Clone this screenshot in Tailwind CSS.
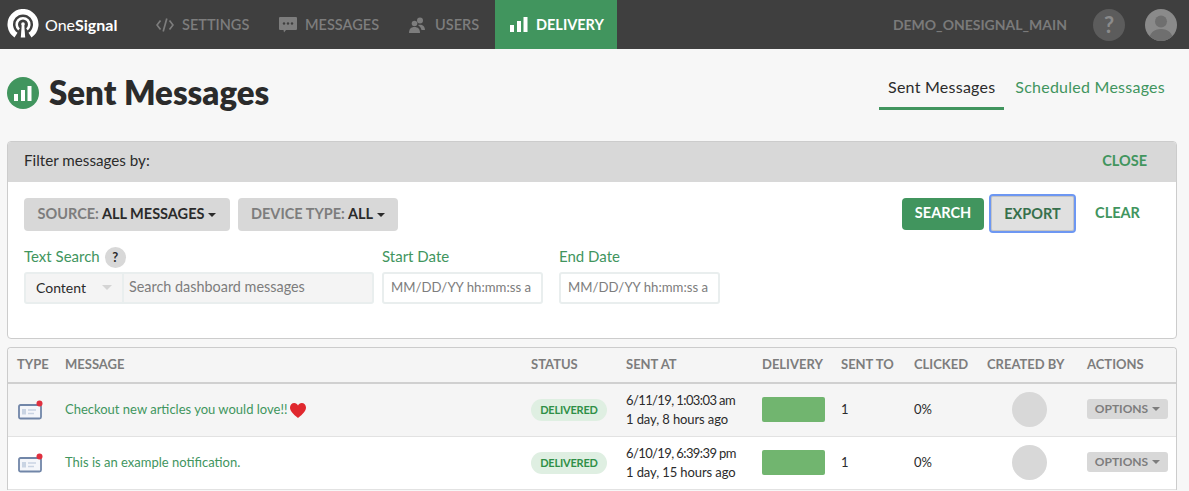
<!DOCTYPE html>
<html lang="en">
<head>
  <meta charset="UTF-8"/>
  <title>Sent Messages</title>
  <script src="https://cdn.jsdelivr.net/npm/@tailwindcss/browser@4"></script>
</head>
<body class="bg-[#f7f7f7] font-['Lato',sans-serif] text-[#2b2b2b] h-[491px] overflow-hidden">

  <!-- Top nav -->
  <nav class="h-[49px] bg-[#3f3f3f] flex items-center text-[#7d7d7d] font-semibold text-[14.500px]">
    <div class="flex items-center pl-[7px] w-[156px]">
      <svg width="32" height="32" viewBox="0 0 32 32" fill="none" stroke="#fff">
        <path d="M9 26.100A12.750 12.750 0 1 1 23 26.100" stroke-width="5.500"/>
        <path d="M12 20.400A6.300 6.300 0 1 1 20 20.400" stroke-width="2.600"/>
        <path d="M14.800 15h2.400l1 13.500h-4.400Z" fill="#fff" stroke="none"/>
        <circle cx="16" cy="15" r="1.800" fill="#fff" stroke="none"/>
      </svg>
      <span class="ml-[6px] text-white text-[16px] font-normal">One<span class="font-bold">Signal</span></span>
    </div>
    <a class="flex items-center w-[123px]">
      <svg class="w-[18px] h-[14px]" viewBox="0 0 18 14" fill="none" stroke="#7d7d7d" stroke-width="1.700"><path d="M4.500 2.500 1 7l3.500 4.500M13.500 2.500 17 7l-3.500 4.500M10.800 .5 7.200 13.500"/></svg>
      <span class="ml-[8px]">SETTINGS</span>
    </a>
    <a class="flex items-center w-[130px]">
      <svg class="w-[18px] h-[16px]" viewBox="0 0 18 16"><path d="M1 0h16a1 1 0 0 1 1 1v11a1 1 0 0 1-1 1H7l-2 2.500L4.500 13H1a1 1 0 0 1-1-1V1a1 1 0 0 1 1-1Z" fill="#7d7d7d"/><circle cx="5" cy="6.500" r="1.200" fill="#3f3f3f"/><circle cx="9" cy="6.500" r="1.200" fill="#3f3f3f"/><circle cx="13" cy="6.500" r="1.200" fill="#3f3f3f"/></svg>
      <span class="ml-[8px]">MESSAGES</span>
    </a>
    <a class="flex items-center w-[86px]">
      <svg class="w-[16px] h-[16px]" viewBox="0 0 16 16" fill="#7d7d7d"><circle cx="5.500" cy="6.500" r="2.800"/><circle cx="11" cy="3.500" r="3"/><path d="M0 16c0-4 2-6 5.500-6s5.500 2 5.500 6Z"/><path d="M9 8c3-1 7 0 7 5h-3.500c-.5-2-1.500-3.500-3.500-5Z"/></svg>
      <span class="ml-[10px]">USERS</span>
    </a>
    <a class="flex items-center h-full w-[122px] bg-[#41955e] text-white font-bold pl-[15px]">
      <svg class="w-[18px] h-[15px]" viewBox="0 0 18 15" fill="#fff"><rect x="0" y="8" width="4" height="7"/><rect x="7" y="4" width="4" height="11"/><rect x="13.500" y="0" width="4" height="15"/></svg>
      <span class="ml-[8px]">DELIVERY</span>
    </a>
    <span class="ml-auto text-[14px] font-bold text-[#7a7a7a]">DEMO_ONESIGNAL_MAIN</span>
    <div class="ml-[26px] w-[32px] h-[32px] rounded-full bg-[#5c5c5c] flex items-center justify-center text-[#8b8b8b] text-[22px] font-bold">?</div>
    <div class="ml-[20px] mr-[12px] w-[32px] h-[32px] rounded-full bg-[#8a8a8a] overflow-hidden">
      <svg width="32" height="32" viewBox="0 0 32 32" fill="#6f6f6f"><circle cx="16" cy="12.500" r="6"/><path d="M4 32c0-8 5-12 12-12s12 4 12 12Z"/></svg>
    </div>
  </nav>

  <!-- Page heading -->
  <header class="flex h-[92px] pl-[7px] pr-[24px]">
    <div class="flex items-center h-[86px]">
      <div class="mt-[2px] w-[32px] h-[32px] rounded-full bg-[#41955e] flex items-center justify-center">
        <svg class="w-[18px] h-[15px]" viewBox="0 0 18 15" fill="#fff"><rect x="0" y="8" width="4" height="7"/><rect x="7" y="4" width="4" height="11"/><rect x="13.500" y="0" width="4" height="15"/></svg>
      </div>
      <h1 class="ml-[10px] text-[33px] leading-none font-extrabold">Sent Messages</h1>
    </div>
    <div class="ml-auto flex h-[61px] text-[16px] tracking-[0.25px]">
      <a class="w-[125px] flex items-center justify-center pt-[18px] border-b-[3px] border-[#41955e]">Sent Messages</a>
      <a class="ml-[11px] flex items-center pt-[18px] border-b-[3px] border-transparent text-[#41955e]">Scheduled Messages</a>
    </div>
  </header>

  <!-- Filter card -->
  <section class="ml-[7px] mr-[12px] h-[198px] rounded-[4px] border border-[#cccccc] bg-white overflow-hidden">
    <div class="h-[40px] bg-[#d8d8d8] flex items-center justify-between pl-[16px] pr-[29px] pb-[3px] text-[15.200px]">
      <span>Filter messages by:</span>
      <span class="text-[#41955e] font-bold text-[14.500px]">CLOSE</span>
    </div>
    <div class="flex items-start h-[33px] mt-[16px] pl-[16px] text-[14.500px] font-bold">
      <button class="h-[33px] w-[206px] pb-[2px] rounded-[4px] bg-[#d8d8d8] text-[#7d7d7d] flex items-center justify-center gap-[4px]">
        <span>SOURCE: <span class="text-[#2b2b2b]">ALL MESSAGES</span></span>
        <span class="mt-[2px] w-0 h-0 border-x-[4px] border-x-transparent border-t-[4px] border-t-[#2b2b2b]"></span>
      </button>
      <button class="ml-[8px] h-[33px] w-[160px] pb-[2px] rounded-[4px] bg-[#d8d8d8] text-[#7d7d7d] flex items-center justify-center gap-[4px]">
        <span>DEVICE TYPE: <span class="text-[#2b2b2b]">ALL</span></span>
        <span class="mt-[2px] w-0 h-0 border-x-[4px] border-x-transparent border-t-[4px] border-t-[#2b2b2b]"></span>
      </button>
      <button class="ml-auto h-[32px] w-[82px] pb-[2px] rounded-[4px] bg-[#41955e] text-white">SEARCH</button>
      <button class="ml-[5px] -mt-[4px] h-[39px] w-[87px] rounded-[4px] bg-[#e0e0e0] border-[2px] border-[#6d97f2] text-[#37704c] shadow-[inset_0_0_0_1px_#c4c4c4]">EXPORT</button>
      <button class="w-[83px] mr-[17px] h-[32px] pb-[2px] text-[#41955e]">CLEAR</button>
    </div>
    <div class="flex pl-[16px] mt-[16px] text-[15px]">
      <div class="w-[358px]">
        <label class="flex items-center h-[24px] pb-[5px] text-[#41955e]">Text Search
          <span class="ml-[5px] mt-[2px] w-[21px] h-[21px] rounded-full bg-[#d8d8d8] text-[#2b2b2b] text-[13px] font-bold flex items-center justify-center">?</span>
        </label>
        <div class="mt-[1px] w-[350px] h-[32px] flex rounded-[3px] border-[2px] border-[#e9eeee] bg-[#f4f4f4] text-[14px]">
          <div class="w-[98px] flex items-center justify-between pb-[2px] px-[10px] border-r-[2px] border-[#e9eeee]">
            <span>Content</span>
            <span class="w-0 h-0 border-x-[5px] border-x-transparent border-t-[5px] border-t-[#d4d4d4]"></span>
          </div>
          <input class="flex-1 min-w-0 pl-[5px] pb-[2px] text-[14.400px] bg-transparent outline-none placeholder:text-[#7d7d7d]" placeholder="Search dashboard messages"/>
        </div>
      </div>
      <div class="w-[177px]">
        <label class="flex items-center h-[24px] pb-[5px] text-[#41955e]">Start Date</label>
        <input class="mt-[1px] w-[161px] h-[32px] pl-[7px] pb-[2px] rounded-[3px] border-[2px] border-[#e9eeee] text-[13.200px] outline-none placeholder:text-[#7d7d7d]" placeholder="MM/DD/YY hh:mm:ss a"/>
      </div>
      <div>
        <label class="flex items-center h-[24px] pb-[5px] text-[#41955e]">End Date</label>
        <input class="mt-[1px] w-[161px] h-[32px] pl-[7px] pb-[2px] rounded-[3px] border-[2px] border-[#e9eeee] text-[13.200px] outline-none placeholder:text-[#7d7d7d]" placeholder="MM/DD/YY hh:mm:ss a"/>
      </div>
    </div>
  </section>

  <!-- Messages table -->
  <section class="ml-[7px] mr-[12px] mt-[8px] rounded-t-[4px] border border-b-0 border-[#cccccc] bg-white text-[13px]">
    <div class="h-[36px] bg-[#f5f5f5] rounded-t-[4px] border-b-[2px] border-[#d0d0d0] grid grid-cols-[48px_466px_95px_136px_79px_73px_73px_100px_1fr] pl-[9px] items-center text-[#7d7d7d] font-bold">
      <span>TYPE</span><span>MESSAGE</span><span>STATUS</span><span>SENT AT</span><span>DELIVERY</span><span>SENT TO</span><span>CLICKED</span><span>CREATED BY</span><span>ACTIONS</span>
    </div>

    <div class="h-[53px] bg-[#f5f5f5] border-b border-[#e2e2e2] grid grid-cols-[48px_466px_95px_136px_79px_73px_73px_100px_1fr] pl-[9px] items-center">
      <svg width="25" height="20" viewBox="0 0 25 20" class="ml-[1px]"><rect x="1" y="5" width="22" height="13.500" rx="1.500" fill="#f4f6fa" stroke="#7186a8" stroke-width="1.800"/><rect x="4" y="9" width="4" height="5.500" fill="#c9d4e3"/><path d="M10 10h8M10 13.500h6" stroke="#c9d4e3" stroke-width="1.500"/><circle cx="21.500" cy="3.500" r="3" fill="#e0303f"/></svg>
      <span class="text-[#41955e] flex items-center">Checkout new articles you would love!!<svg class="ml-[3px]" width="16" height="15" viewBox="0 0 16 15"><path d="M8 15C3 11 0 8 0 4.500 0 2 2 0 4.200 0 6 0 7.300 1 8 2.400 8.700 1 10 0 11.800 0 14 0 16 2 16 4.500 16 8 13 11 8 15Z" fill="#e0282e"/></svg></span>
      <span class="w-[76px] h-[22px] rounded-full bg-[#dfefe2] text-[#2f8f47] text-[11px] tracking-[-0.2px] font-bold flex items-center justify-center">DELIVERED</span>
      <div class="leading-[19px]"><div class="tracking-[-0.6px]">6/11/19, 1:03:03 am</div><div class="tracking-[-0.1px]">1 day, 8 hours ago</div></div>
      <div class="-mt-[1px] w-[63px] h-[25px] rounded-[2px] bg-[#71b56f]"></div>
      <span>1</span>
      <span>0%</span>
      <div class="-mt-[1px] ml-[25px] w-[35px] h-[35px] rounded-full bg-[#d8d8d8]"></div>
      <button class="-mt-[2px] w-[81px] h-[20px] rounded-[3px] bg-[#d8d8d8] text-[#7d7d7d] text-[12px] font-bold flex items-center justify-center gap-[4px]">OPTIONS <span class="w-0 h-0 border-x-[4px] border-x-transparent border-t-[4px] border-t-[#7d7d7d]"></span></button>
    </div>

    <div class="h-[53px] bg-white border-b border-[#e2e2e2] grid grid-cols-[48px_466px_95px_136px_79px_73px_73px_100px_1fr] pl-[9px] items-center">
      <svg width="25" height="20" viewBox="0 0 25 20" class="ml-[1px]"><rect x="1" y="5" width="22" height="13.500" rx="1.500" fill="#f4f6fa" stroke="#7186a8" stroke-width="1.800"/><rect x="4" y="9" width="4" height="5.500" fill="#c9d4e3"/><path d="M10 10h8M10 13.500h6" stroke="#c9d4e3" stroke-width="1.500"/><circle cx="21.500" cy="3.500" r="3" fill="#e0303f"/></svg>
      <span class="text-[#41955e]">This is an example notification.</span>
      <span class="w-[76px] h-[22px] rounded-full bg-[#dfefe2] text-[#2f8f47] text-[11px] tracking-[-0.2px] font-bold flex items-center justify-center">DELIVERED</span>
      <div class="leading-[19px]"><div class="tracking-[-0.6px]">6/10/19, 6:39:39 pm</div><div class="tracking-[-0.1px]">1 day, 15 hours ago</div></div>
      <div class="-mt-[1px] w-[63px] h-[25px] rounded-[2px] bg-[#71b56f]"></div>
      <span>1</span>
      <span>0%</span>
      <div class="-mt-[1px] ml-[25px] w-[35px] h-[35px] rounded-full bg-[#d8d8d8]"></div>
      <button class="-mt-[2px] w-[81px] h-[20px] rounded-[3px] bg-[#d8d8d8] text-[#7d7d7d] text-[12px] font-bold flex items-center justify-center gap-[4px]">OPTIONS <span class="w-0 h-0 border-x-[4px] border-x-transparent border-t-[4px] border-t-[#7d7d7d]"></span></button>
    </div>
  </section>

</body>
</html>
